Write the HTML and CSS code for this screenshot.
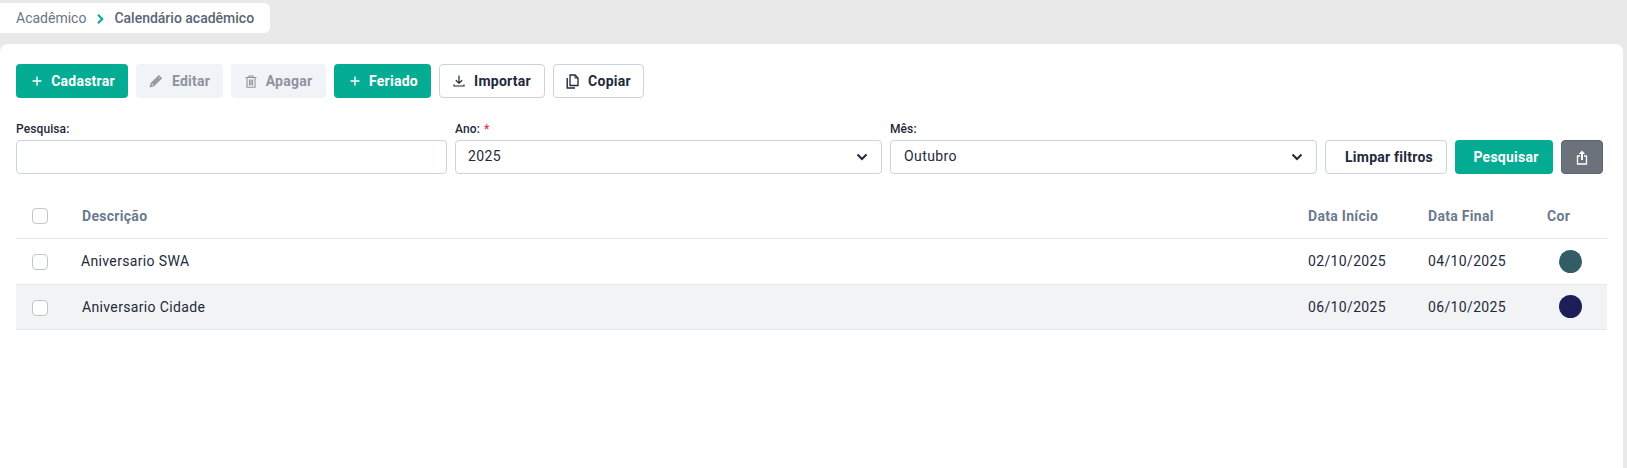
FILE: index.html
```html
<!DOCTYPE html>
<html lang="pt-BR">
<head>
  <meta name="viewport" content="width=device-width, initial-scale=1.0">
  <title>Calendário acadêmico</title>
  <link rel="stylesheet" href="styles.css">
</head>
<body>
  <nav class="crumbs">
    <span class="crumb">Acadêmico</span>
    <svg class="crumb-sep" width="7" height="10" viewBox="0 0 7 10"><path d="M1 .8L5.200 5 1 9.200" fill="none" stroke="#0aae94" stroke-width="2.200"/></svg>
    <span class="crumb current">Calendário acadêmico</span>
  </nav>

  <main class="panel">
    <div class="toolbar">
      <button class="btn primary w-cadastrar">
        <svg width="10" height="10" viewBox="0 0 10 10"><path d="M5 .5v9M.5 5h9" stroke="#fff" stroke-width="1.4"/></svg>
        Cadastrar
      </button>
      <button class="btn muted w-editar">
        <svg width="14" height="14" viewBox="0 0 14 14"><path d="M1.500 12.500l.8-3.200L9.800 1.800l2.400 2.400-7.500 7.500z" fill="none" stroke="#8f949d" stroke-width="1.300"/><path d="M3 9.500l1.500 1.500L11 4.500 9.500 3z" fill="#8f949d"/></svg>
        Editar
      </button>
      <button class="btn muted w-apagar">
        <svg width="12" height="13" viewBox="0 0 12 13"><path d="M.5 2.500h11M4 2.500V1h4v1.500M2 2.500V12.300h8V2.500M4.500 4.500V10.500M7.500 4.500V10.500M6 4.500V10.500" fill="none" stroke="#8f949d" stroke-width="1.100"/></svg>
        Apagar
      </button>
      <button class="btn primary w-feriado">
        <svg width="10" height="10" viewBox="0 0 10 10"><path d="M5 .5v9M.5 5h9" stroke="#fff" stroke-width="1.4"/></svg>
        Feriado
      </button>
      <button class="btn outline w-importar">
        <svg width="12" height="12" viewBox="0 0 12 12"><path d="M6 .5v7.500M2.800 5.300L6 8.300l3.200-3M1 9.500v1.500h10V9.500" fill="none" stroke="#1e2a3b" stroke-width="1.200"/></svg>
        Importar
      </button>
      <button class="btn outline w-copiar">
        <svg width="13" height="15" viewBox="0 0 13 15"><path d="M4 1h5l3 3v7.500H4z" fill="none" stroke="#1e2a3b" stroke-width="1.300"/><path d="M9 1v3h3" fill="none" stroke="#1e2a3b"/><path d="M1.200 4v10h7.800" fill="none" stroke="#1e2a3b" stroke-width="1.400"/></svg>
        Copiar
      </button>
    </div>

    <div class="filters">
      <div class="field f-search">
        <label>Pesquisa:</label>
        <div class="control"></div>
      </div>
      <div class="field f-year">
        <label>Ano: <span class="req">*</span></label>
        <div class="control select">
          <span>2025</span>
          <svg width="12" height="8" viewBox="0 0 12 8"><path d="M1.500 1.500L6 6l4.500-4.500" fill="none" stroke="#1e2a3b" stroke-width="2"/></svg>
        </div>
      </div>
      <div class="field f-month">
        <label>Mês:</label>
        <div class="control select">
          <span>Outubro</span>
          <svg width="12" height="8" viewBox="0 0 12 8"><path d="M1.500 1.500L6 6l4.500-4.500" fill="none" stroke="#1e2a3b" stroke-width="2"/></svg>
        </div>
      </div>
      <button class="btn outline w-limpar">Limpar filtros</button>
      <button class="btn primary w-pesquisar">Pesquisar</button>
      <button class="btn grey w-export">
        <svg width="12" height="15" viewBox="0 0 12 15"><path d="M6 10V2" stroke="#fff" stroke-width="2"/><path d="M2.800 4L6 .5 9.200 4z" fill="#fff"/><path d="M4 6H1.500v8h9V6H8" fill="none" stroke="#fff" stroke-width="1.300"/></svg>
      </button>
    </div>

    <table class="grid">
      <thead>
        <tr>
          <th class="c-check"><span class="check"></span></th>
          <th>Descrição</th>
          <th class="c-start">Data Início</th>
          <th class="c-end">Data Final</th>
          <th class="c-color">Cor</th>
        </tr>
      </thead>
      <tbody>
        <tr class="first">
          <td class="c-check"><span class="check"></span></td>
          <td><span class="tight">Aniversario SWA</span></td>
          <td>02/10/2025</td>
          <td>04/10/2025</td>
          <td><span class="dot teal"></span></td>
        </tr>
        <tr class="alt">
          <td class="c-check"><span class="check"></span></td>
          <td>Aniversario Cidade</td>
          <td>06/10/2025</td>
          <td>06/10/2025</td>
          <td><span class="dot navy"></span></td>
        </tr>
      </tbody>
    </table>
  </main>
</body>
</html>
```

FILE: styles.css
```css
* {
  box-sizing: border-box;
}
html, body {
  height: 100%;
}
body {
  margin: 0;
  padding: 3px 4px 0 0;
  background: #e9e9e9;
  font-family: Roboto, "Liberation Sans", sans-serif;
  font-size: 14px;
  color: #1e2a3b;
  display: flex;
  flex-direction: column;
  overflow: hidden;
}
.crumbs {
  width: 270px;
  height: 30px;
  padding-left: 16px;
  background: #fff;
  border-radius: 0 6px 6px 0;
  display: flex;
  align-items: center;
  gap: 10.5px;
}
.crumb {
  color: #6b7585;
}
.crumb.current {
  color: #5a6576;
  font-weight: 500;
}
.crumb-sep {
  margin-top: 1px;
}
.panel {
  flex: 1;
  margin-top: 11px;
  padding: 20px 16px 0;
  background: #fff;
  border-radius: 8px 8px 0 0;
}
.toolbar {
  display: flex;
  gap: 8px;
}
.btn {
  height: 34px;
  padding: 0;
  border: 1px solid transparent;
  border-radius: 4px;
  font-family: inherit;
  font-size: 14px;
  font-weight: 700;
  letter-spacing: 0.25px;
  display: flex;
  align-items: center;
  justify-content: center;
  gap: 9px;
  flex: none;
}
.primary {
  background: #03ac92;
  color: #fff;
  padding-left: 3px;
}
.muted {
  background: #f0f3f8;
  color: #8f949d;
}
.outline {
  background: #fff;
  border-color: #cbd3e1;
  color: #1e2a3b;
}
.grey {
  background: #6c727b;
  border-color: #5f656e;
}
.w-cadastrar { width: 112px; }
.w-editar { width: 87px; }
.w-apagar { width: 95px; }
.w-feriado { width: 97px; }
.w-importar { width: 106px; }
.w-copiar { width: 91px; }
.w-limpar { width: 122px; padding-left: 6px; }
.w-pesquisar { width: 98px; padding-left: 4px; }
.w-export { width: 42px; }
.filters {
  margin-top: 22px;
  display: flex;
  align-items: flex-end;
  gap: 8px;
}
.field label {
  display: block;
  height: 20px;
  font-size: 12px;
  font-weight: 500;
  letter-spacing: 0.1px;
  line-height: 18px;
}
.req {
  color: #e0323c;
  margin-left: 1px;
}
.f-search { width: 431px; }
.f-year { width: 427px; }
.f-month { width: 427px; }
.control {
  height: 34px;
  padding: 0 13px 0 12px;
  background: #fff;
  border: 1px solid #cbd3e1;
  border-radius: 4px;
  display: flex;
  align-items: center;
  justify-content: space-between;
  letter-spacing: 0.4px;
}
.f-month .control {
  padding-left: 13px;
}
.control span {
  margin-bottom: 2px;
}
.grid {
  margin-top: 14px;
  width: 1591px;
  border-collapse: collapse;
  table-layout: fixed;
}
.grid th, .grid td {
  padding: 0;
  text-align: left;
  letter-spacing: 0.35px;
}
.grid th {
  height: 50px;
  padding-top: 6px;
  color: #6b7a90;
  font-weight: 700;
  letter-spacing: 0.3px;
  border-bottom: 1px solid #e5e7ee;
}
.grid td {
  height: 45px;
  border-bottom: 1px solid #e5e7ee;
}
.first td {
  height: 46px;
}
.alt td {
  background: #f2f3f5;
}
.c-check {
  width: 66px;
  padding-left: 16px !important;
}
td .check {
  margin-top: 2px;
}
.c-start { width: 120px; }
.c-end { width: 119px; }
.c-color { width: 60px; }
.check {
  display: block;
  width: 16px;
  height: 16px;
  background: #fff;
  border: 1px solid #c0c8c4;
  border-radius: 4px;
}
.tight {
  margin-left: -1px;
}
.dot {
  display: block;
  width: 23px;
  height: 23px;
  margin-left: 12px;
  border-radius: 50%;
}
.teal { background: #335c67; }
.navy { background: #1d1e58; }
```
